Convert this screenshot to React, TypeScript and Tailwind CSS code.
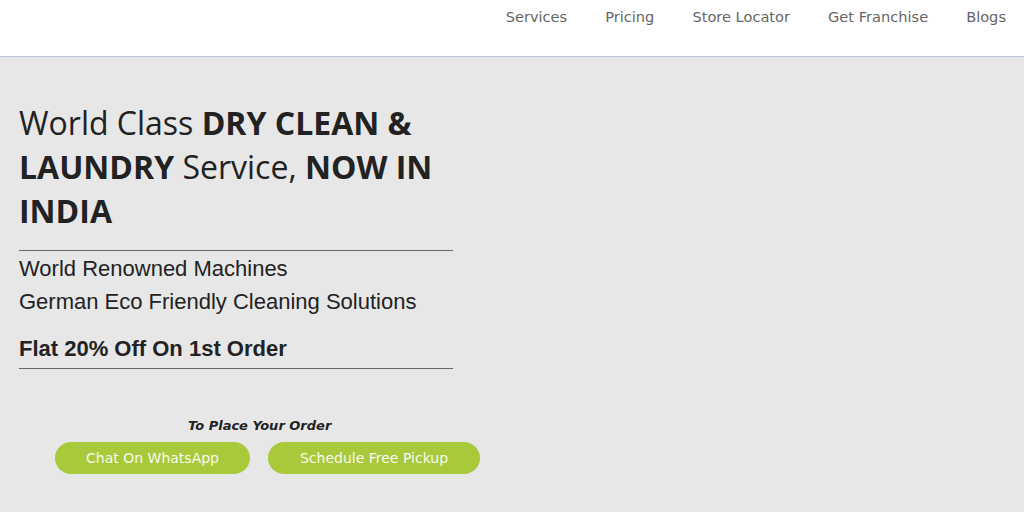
import React from "react";

export default function App() {
  const nav = ["Services", "Pricing", "Store Locator", "Get Franchise", "Blogs"];
  return (
    <div className="w-[1024px] h-[512px] bg-[#e7e7e7] overflow-hidden">
      <header className="h-[57px] bg-white border-b border-[#b9c7d6] flex justify-end items-start pr-[18px] pt-[7px]">
        <nav className="flex gap-[38px] font-['DejaVu_Sans',Verdana,sans-serif] text-[14.6px] text-[#666]">
          {nav.map((n) => (
            <span key={n} className="leading-[20px]">{n}</span>
          ))}
        </nav>
      </header>
      <main className="pl-[19px] pt-[44px] w-[480px]">
        <h1 className="font-['Open_Sans',sans-serif] text-[32px] leading-[44px] text-[#222] font-normal w-[440px]">
          World Class <b className="font-bold">DRY CLEAN &amp; LAUNDRY</b> Service, <b className="font-bold">NOW IN INDIA</b>
        </h1>
        <div className="mt-[17px] border-t border-[#666] w-[434px]" />
        <div className="font-['Liberation_Sans',Arial,sans-serif] text-[22px] text-[#222] leading-[33px] pt-[1px]">
          <p>World Renowned Machines</p>
          <p>German Eco Friendly Cleaning Solutions</p>
          <p className="font-bold mt-[14px]">Flat 20% Off On 1st Order</p>
        </div>
        <div className="mt-[3px] border-t border-[#666] w-[434px]" />
        <div className="mt-[48px] font-['DejaVu_Sans',Verdana,sans-serif]">
          <p className="text-[13px] font-bold italic text-[#222] leading-[18px] ml-[169px]">To Place Your Order</p>
          <div className="flex gap-[18px] mt-[7px] ml-[36px]">
            <button className="w-[196px] h-[32px] rounded-full bg-[#a8ca3a] text-[#f8f8f0] text-[14px]">Chat On WhatsApp</button>
            <button className="w-[213px] h-[32px] rounded-full bg-[#a8ca3a] text-[#f8f8f0] text-[14px]">Schedule Free Pickup</button>
          </div>
        </div>
      </main>
    </div>
  );
}
